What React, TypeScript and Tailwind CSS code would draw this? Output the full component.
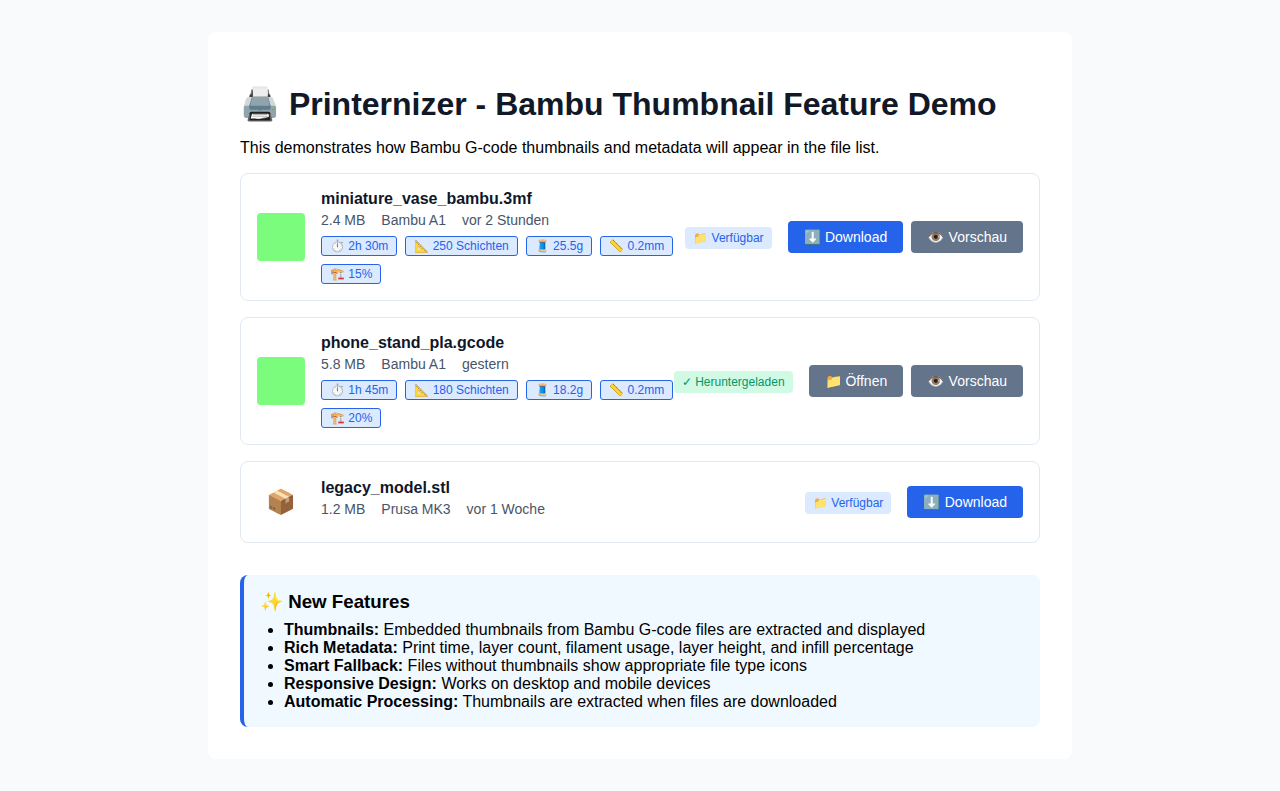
type FileItem = {
  name: string;
  size: string;
  printer: string;
  when: string;
  tags?: string[];
  downloaded?: boolean;
  preview?: boolean;
};

const files: FileItem[] = [
  {
    name: "miniature_vase_bambu.3mf",
    size: "2.4 MB",
    printer: "Bambu A1",
    when: "vor 2 Stunden",
    tags: ["⏱️ 2h 30m", "📐 250 Schichten", "🧵 25.5g", "📏 0.2mm", "🏗️ 15%"],
    preview: true,
  },
  {
    name: "phone_stand_pla.gcode",
    size: "5.8 MB",
    printer: "Bambu A1",
    when: "gestern",
    tags: ["⏱️ 1h 45m", "📐 180 Schichten", "🧵 18.2g", "📏 0.2mm", "🏗️ 20%"],
    downloaded: true,
    preview: true,
  },
  {
    name: "legacy_model.stl",
    size: "1.2 MB",
    printer: "Prusa MK3",
    when: "vor 1 Woche",
  },
];

const features = [
  ["Thumbnails:", "Embedded thumbnails from Bambu G-code files are extracted and displayed"],
  ["Rich Metadata:", "Print time, layer count, filament usage, layer height, and infill percentage"],
  ["Smart Fallback:", "Files without thumbnails show appropriate file type icons"],
  ["Responsive Design:", "Works on desktop and mobile devices"],
  ["Automatic Processing:", "Thumbnails are extracted when files are downloaded"],
];

const FileCard = ({ file }: { file: FileItem }) => {
  return (
    <div className="flex items-center rounded-lg border border-[#e2e8f0] bg-white p-4">
      {/* Thumbnail */}
      {file.tags ? (
        <div className="mr-4 h-12 w-12 shrink-0 rounded bg-[#7cfc7c]" />
      ) : (
        <div className="mr-4 flex h-12 w-12 shrink-0 items-center justify-center text-[24px]">📦</div>
      )}

      {/* Info */}
      <div className="min-w-0 flex-1">
        <div className="mb-1 text-[16px] font-semibold text-[#0f172a]">{file.name}</div>
        <div className="mb-2 flex gap-4 text-[14px] text-[#475569]">
          <span>{file.size}</span>
          <span>{file.printer}</span>
          <span>{file.when}</span>
        </div>
        {file.tags && (
          <div className="flex flex-wrap gap-2">
            {file.tags.map((tag) => (
              <span
                key={tag}
                className="rounded-[3px] border border-[#2563eb] bg-[#dbeafe] px-2 py-0.5 text-[12px] text-[#2563eb]"
              >
                {tag}
              </span>
            ))}
          </div>
        )}
      </div>

      {/* Status */}
      <div className="mr-4">
        {file.downloaded ? (
          <span className="rounded bg-[#d1fae5] px-2 py-1 text-[12px] text-[#059669]">✓ Heruntergeladen</span>
        ) : (
          <span className="rounded bg-[#dbeafe] px-2 py-1 text-[12px] text-[#2563eb]">📁 Verfügbar</span>
        )}
      </div>

      {/* Actions */}
      <div className="flex gap-2">
        {file.downloaded ? (
          <button className="rounded bg-[#64748b] px-4 py-2 text-[14px] text-white">📁 Öffnen</button>
        ) : (
          <button className="rounded bg-[#2563eb] px-4 py-2 text-[14px] text-white">
            <span className="mr-[0.5px]">⬇️</span> Download
          </button>
        )}
        {file.preview && (
          <button className="rounded bg-[#64748b] px-4 py-2 text-[14px] text-white">
            <span className="mr-[0.5px]">👁️</span> Vorschau
          </button>
        )}
      </div>
    </div>
  );
};

export default function App() {
  return (
    <div className="min-h-[791px] bg-[#f8fafc] p-8 font-['Liberation_Sans',Arial,sans-serif] leading-[normal] text-black">
      <div className="mx-auto w-[864px] rounded-lg bg-white p-8">
        <h1 className="mt-[21.44px] mb-[15.44px] text-[32px] font-bold text-[#111827]">🖨️ Printernizer - Bambu Thumbnail Feature Demo</h1>
        <p className="mb-4 text-[16px]">This demonstrates how Bambu G-code thumbnails and metadata will appear in the file list.</p>

        <div className="flex flex-col gap-4">
          {files.map((file) => (
            <FileCard key={file.name} file={file} />
          ))}
        </div>

        {/* Features */}
        <div className="mt-8 rounded-lg border-l-4 border-[#2563eb] bg-[#f0f9ff] p-4">
          <h3 className="mb-2 text-[18.72px] font-bold">✨ New Features</h3>
          <ul className="list-disc pl-6 text-[16px]">
            {features.map(([title, text]) => (
              <li key={title}>
                <strong>{title}</strong> {text}
              </li>
            ))}
          </ul>
        </div>
      </div>
    </div>
  );
}
